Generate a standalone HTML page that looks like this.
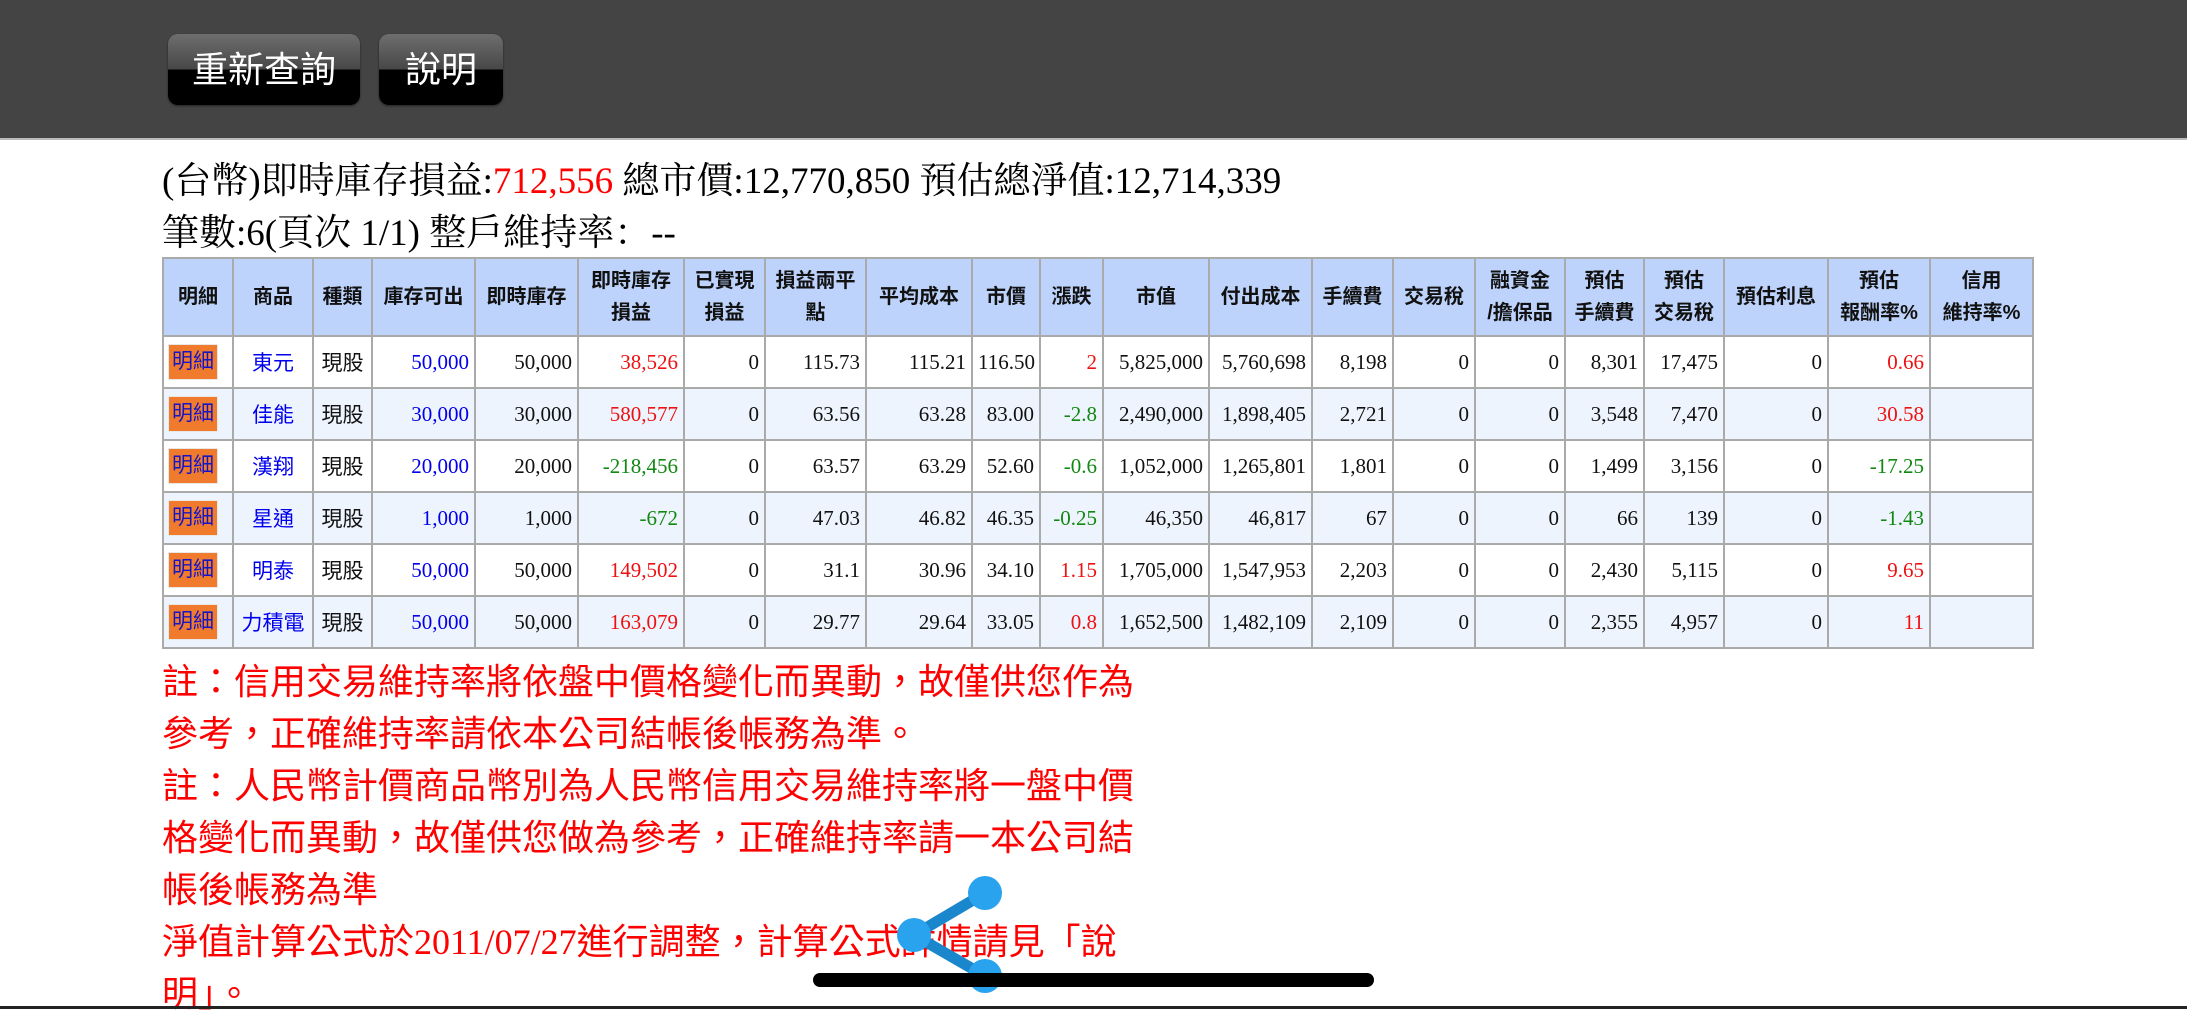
<!DOCTYPE html>
<html><head><meta charset="utf-8">
<style>
body{margin:0;width:2187px;height:1009px;overflow:hidden;background:#fff;font-family:"Liberation Serif","Noto Serif CJK SC","Noto Sans CJK TC",serif;position:relative}
.top{position:absolute;left:0;top:0;width:2187px;height:138px;background:#444;border-bottom:2px solid #bbb}
.btn{position:absolute;top:34px;height:71px;border-radius:10px;background:linear-gradient(#6e6e6e,#474747 50%,#000 50%,#000);color:#fff;font-family:"Liberation Sans","Noto Sans CJK TC",sans-serif;font-size:36px;line-height:71px;text-align:center;box-shadow:0 1px 2px #222}
.l1{position:absolute;left:162px;top:150px;font-size:37px;white-space:nowrap}
.l2{position:absolute;left:162px;top:202px;font-size:37px;white-space:nowrap}
table{position:absolute;left:162px;top:257px;border-collapse:collapse;table-layout:fixed;width:1870px;border:2px solid #999}
td,th{border:2px solid #aaa;padding:0 5px;overflow:hidden;white-space:nowrap}
th{background:#bdd3fb;font-family:"Liberation Sans","Noto Sans CJK TC",sans-serif;font-size:20px;font-weight:bold;line-height:32px;height:76px;text-align:center;color:#111}
td{height:50px;font-size:21px;text-align:right;color:#111}
tr.a td{background:#fff}
tr.b td{background:#eef4fd}
td.c{text-align:center;font-family:"Liberation Sans","Noto Sans CJK TC",sans-serif;font-size:21px}
td.d{padding:0 4px;text-align:left}
.mx{display:inline-block;background:#f07b2c;color:#1515c8;font-family:"Liberation Sans","Noto Sans CJK TC",sans-serif;font-size:21px;padding:4px 3px;line-height:26px;border:1px solid #e8e8e8}
.bl{color:#0000ee}.r{color:#ee1111}.g{color:#118811}
.note{position:absolute;left:162px;top:656px;width:980px;color:#f00;font-family:"Liberation Serif","Noto Sans CJK TC",sans-serif;font-size:36px;line-height:52px}
</style></head><body>
<div class="top">
<div class="btn" style="left:168px;width:192px">重新查詢</div>
<div class="btn" style="left:379px;width:124px">說明</div>
</div>
<div class="l1">(台幣)即時庫存損益:<span style="color:#f00">712,556</span> 總市價:12,770,850 預估總淨值:12,714,339</div>
<div class="l2">筆數:6(頁次 1/1) 整戶維持率：--</div>
<table>
<colgroup><col style="width:70px"><col style="width:80px"><col style="width:59px"><col style="width:103px"><col style="width:103px"><col style="width:106px"><col style="width:81px"><col style="width:101px"><col style="width:106px"><col style="width:68px"><col style="width:63px"><col style="width:106px"><col style="width:103px"><col style="width:81px"><col style="width:82px"><col style="width:90px"><col style="width:79px"><col style="width:80px"><col style="width:104px"><col style="width:102px"><col style="width:103px"></colgroup>
<tr><th>明細</th><th>商品</th><th>種類</th><th>庫存可出</th><th>即時庫存</th><th>即時庫存<br>損益</th><th>已實現<br>損益</th><th>損益兩平<br>點</th><th>平均成本</th><th>市價</th><th>漲跌</th><th>市值</th><th>付出成本</th><th>手續費</th><th>交易稅</th><th>融資金<br>/擔保品</th><th>預估<br>手續費</th><th>預估<br>交易稅</th><th>預估利息</th><th>預估<br>報酬率%</th><th>信用<br>維持率%</th></tr>
<tr class="a"><td class="d"><span class="mx">明細</span></td><td class="c bl">東元</td><td class="c">現股</td><td class="bl">50,000</td><td>50,000</td><td class="r">38,526</td><td>0</td><td>115.73</td><td>115.21</td><td>116.50</td><td class="r">2</td><td>5,825,000</td><td>5,760,698</td><td>8,198</td><td>0</td><td>0</td><td>8,301</td><td>17,475</td><td>0</td><td class="r">0.66</td><td></td></tr>
<tr class="b"><td class="d"><span class="mx">明細</span></td><td class="c bl">佳能</td><td class="c">現股</td><td class="bl">30,000</td><td>30,000</td><td class="r">580,577</td><td>0</td><td>63.56</td><td>63.28</td><td>83.00</td><td class="g">-2.8</td><td>2,490,000</td><td>1,898,405</td><td>2,721</td><td>0</td><td>0</td><td>3,548</td><td>7,470</td><td>0</td><td class="r">30.58</td><td></td></tr>
<tr class="a"><td class="d"><span class="mx">明細</span></td><td class="c bl">漢翔</td><td class="c">現股</td><td class="bl">20,000</td><td>20,000</td><td class="g">-218,456</td><td>0</td><td>63.57</td><td>63.29</td><td>52.60</td><td class="g">-0.6</td><td>1,052,000</td><td>1,265,801</td><td>1,801</td><td>0</td><td>0</td><td>1,499</td><td>3,156</td><td>0</td><td class="g">-17.25</td><td></td></tr>
<tr class="b"><td class="d"><span class="mx">明細</span></td><td class="c bl">星通</td><td class="c">現股</td><td class="bl">1,000</td><td>1,000</td><td class="g">-672</td><td>0</td><td>47.03</td><td>46.82</td><td>46.35</td><td class="g">-0.25</td><td>46,350</td><td>46,817</td><td>67</td><td>0</td><td>0</td><td>66</td><td>139</td><td>0</td><td class="g">-1.43</td><td></td></tr>
<tr class="a"><td class="d"><span class="mx">明細</span></td><td class="c bl">明泰</td><td class="c">現股</td><td class="bl">50,000</td><td>50,000</td><td class="r">149,502</td><td>0</td><td>31.1</td><td>30.96</td><td>34.10</td><td class="r">1.15</td><td>1,705,000</td><td>1,547,953</td><td>2,203</td><td>0</td><td>0</td><td>2,430</td><td>5,115</td><td>0</td><td class="r">9.65</td><td></td></tr>
<tr class="b"><td class="d"><span class="mx">明細</span></td><td class="c bl" style="padding:0 2px">力積電</td><td class="c">現股</td><td class="bl">50,000</td><td>50,000</td><td class="r">163,079</td><td>0</td><td>29.77</td><td>29.64</td><td>33.05</td><td class="r">0.8</td><td>1,652,500</td><td>1,482,109</td><td>2,109</td><td>0</td><td>0</td><td>2,355</td><td>4,957</td><td>0</td><td class="r">11</td><td></td></tr>
</table>
<div class="note">註：信用交易維持率將依盤中價格變化而異動，故僅供您作為參考，正確維持率請依本公司結帳後帳務為準。<br>註：人民幣計價商品幣別為人民幣信用交易維持率將一盤中價格變化而異動，故僅供您做為參考，正確維持率請一本公司結帳後帳務為準<br>淨值計算公式於2011/07/27進行調整，計算公式詳情請見「說明」。</div>
<svg style="position:absolute;left:0;top:0" width="2187" height="1009">
<line x1="985" y1="893" x2="914" y2="935" stroke="#1a86cc" stroke-width="11"/>
<line x1="914" y1="935" x2="985" y2="976" stroke="#1a86cc" stroke-width="11"/>
<circle cx="985" cy="893" r="17" fill="#2aa3ee"/>
<circle cx="914" cy="935" r="17" fill="#2aa3ee"/>
<circle cx="985" cy="976" r="17" fill="#2aa3ee"/>
<rect x="813" y="973" width="561" height="14" rx="7" fill="#000"/>
<rect x="0" y="1006" width="2187" height="3" fill="#222"/>
</svg>
</body></html>
